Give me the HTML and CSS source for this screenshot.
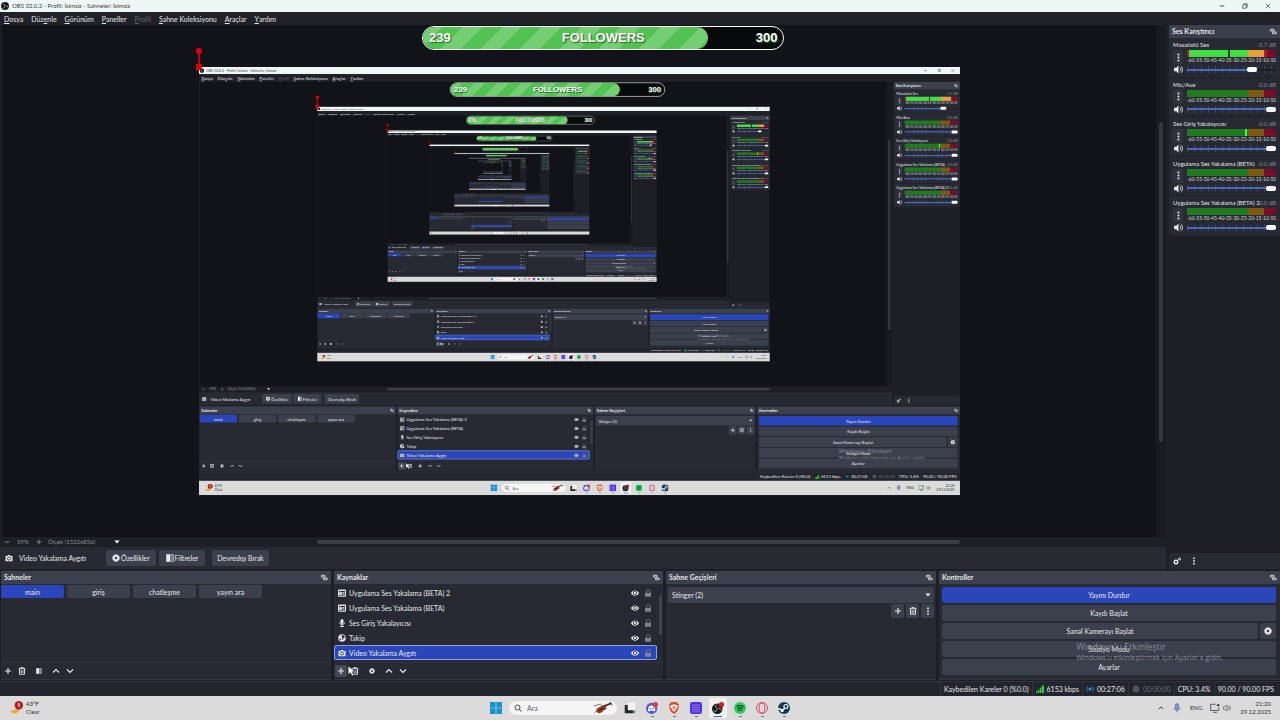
FILE: index.html
```html
<!DOCTYPE html>
<html lang="tr">
<head>
    <meta charset="UTF-8">
    <meta name="viewport" content="width=device-width, initial-scale=1.0">
    <title>OBS 32.0.2 - Profil: İsimsiz - Sahneler: İsimsiz</title>
    <link rel="stylesheet" href="styles.css">
</head>
<body>
    <!-- Shared icons -->
    <svg class="sprite" aria-hidden="true">
        <symbol id="i-obs" viewBox="0 0 16 16"><circle cx="8" cy="8" r="8" fill="#15161a"/><g fill="none" stroke="#c9ccd2" stroke-width="1.3"><path d="M8 7.500C5 7 4.500 4 6.500 2.500M8.500 8.500c2.500-2 5-.5 5 2M7.500 9c.3 3-2.500 4.500-4.500 3"/></g></symbol>
        <symbol id="i-dock" viewBox="0 0 16 16"><path d="M1 3h8v4H1zM6 9h8v4H6z" fill="none" stroke="currentColor" stroke-width="2"/></symbol>
        <symbol id="i-plus" viewBox="0 0 16 16"><path d="M8 2v12M2 8h12" stroke="currentColor" stroke-width="2.400"/></symbol>
        <symbol id="i-minus" viewBox="0 0 16 16"><path d="M2 8h12" stroke="currentColor" stroke-width="2.400"/></symbol>
        <symbol id="i-trash" viewBox="0 0 16 16"><path d="M1 3.500h14M5.500 3V1.200h5V3M3 4v10.500h10V4M6.300 6.500v5.500M9.700 6.500v5.500" fill="none" stroke="currentColor" stroke-width="1.900"/></symbol>
        <symbol id="i-filter" viewBox="0 0 16 16"><path d="M1 1h14v14H1z" fill="#777b85"/><path d="M1 1h7v14H1z" fill="currentColor"/><path d="M1 1h14v14H1z" fill="none" stroke="currentColor" stroke-width="1"/></symbol>
        <symbol id="i-up" viewBox="0 0 16 16"><path d="M2 11l6-6 6 6" fill="none" stroke="currentColor" stroke-width="2.400"/></symbol>
        <symbol id="i-down" viewBox="0 0 16 16"><path d="M2 5l6 6 6-6" fill="none" stroke="currentColor" stroke-width="2.400"/></symbol>
        <symbol id="i-gear" viewBox="0 0 16 16"><circle cx="8" cy="8" r="4.500" fill="none" stroke="currentColor" stroke-width="4"/><circle cx="8" cy="8" r="6.700" fill="none" stroke="currentColor" stroke-width="2" stroke-dasharray="3.200 2.060"/></symbol>
        <symbol id="i-gears" viewBox="0 0 16 16"><circle cx="6" cy="10" r="3.500" fill="none" stroke="currentColor" stroke-width="3"/><circle cx="13" cy="4" r="2" fill="none" stroke="currentColor" stroke-width="2"/></symbol>
        <symbol id="i-dots" viewBox="0 0 16 16"><g fill="currentColor"><circle cx="8" cy="2.500" r="1.800"/><circle cx="8" cy="8" r="1.800"/><circle cx="8" cy="13.500" r="1.800"/></g></symbol>
        <symbol id="i-camera" viewBox="0 0 16 16"><path d="M1 4h3.500l1.500-2h4l1.500 2H15v10.500H1z" fill="currentColor"/><circle cx="8" cy="9" r="3.200" fill="none" stroke="#2a2d38" stroke-width="1.600"/></symbol>
        <symbol id="i-app" viewBox="0 0 16 16"><path d="M1 2h14v12.500H1z" fill="none" stroke="currentColor" stroke-width="2"/><path d="M1 3h14M3.500 6.500H7v5H3.500zM9 7h4M9 9.500h4M9 12h4" stroke="currentColor" stroke-width="1.700" fill="currentColor"/></symbol>
        <symbol id="i-mic" viewBox="0 0 16 16"><rect x="5" y="0" width="6" height="10" rx="3" fill="currentColor"/><path d="M3 7c0 6 10 6 10 0M8 12v3M4 15h8" fill="none" stroke="currentColor" stroke-width="1.800"/></symbol>
        <symbol id="i-globe" viewBox="0 0 16 16"><circle cx="8" cy="8" r="7.500" fill="currentColor"/><path d="M8 2l4 1 2 4-3 1-1 4-2-2 1-3-2-2zM3 8l3 2v3l-2-1z" fill="#2a2d38"/></symbol>
        <symbol id="i-eye" viewBox="0 0 16 16"><path d="M0 8c3.500-7 12.500-7 16 0-3.500 7-12.500 7-16 0z" fill="currentColor"/><circle cx="8" cy="8" r="3.300" fill="none" stroke="#2a2d38" stroke-width="1.600"/></symbol>
        <symbol id="i-lock" viewBox="0 0 16 16"><path d="M2 8h12v7.500H2z" fill="currentColor"/><path d="M5 8V4.500C5 0 12 0 12 4.500V8" fill="none" stroke="currentColor" stroke-width="1.800"/></symbol>
        <symbol id="i-sound" viewBox="0 0 16 16"><path d="M0 5h4l4-4v14l-4-4H0z" fill="currentColor"/><path d="M10.500 5c2 1.500 2 4.500 0 6M12 2c4 3 4 9 0 12" fill="none" stroke="currentColor" stroke-width="1.700"/></symbol>
        <symbol id="i-traysound" viewBox="0 0 16 16"><path d="M1 5.500h3l4-3.500v12l-4-3.500H1zM10.500 5c2 1.500 2 4.500 0 6M12.500 3c3 3 3 7 0 10" fill="none" stroke="#444" stroke-width="1.200"/></symbol>
        <symbol id="i-caret" viewBox="0 0 16 16"><path d="M1 4h14l-7 8z" fill="currentColor"/></symbol>
        <symbol id="i-signal" viewBox="0 0 16 16"><path d="M0 12h3v4H0zM4 9h3v7H4zM8 5h3v11H8zM12 1h4v15h-4z" fill="#38c93e"/></symbol>
        <symbol id="i-live" viewBox="0 0 16 16"><circle cx="8" cy="8" r="3" fill="#3e92d8"/><path d="M4 3c-3 3-3 7 0 10M12 3c3 3 3 7 0 10" fill="none" stroke="#28628f" stroke-width="2.500"/></symbol>
        <symbol id="i-rec" viewBox="0 0 16 16"><circle cx="8" cy="8" r="7" fill="#50535b"/></symbol>
        <symbol id="i-moon" viewBox="0 0 32 32"><path d="M17 7c2 8-3 14-15 13 5 9 22 9 21-6-.5-4-2-6-6-7z" fill="#f0a43a"/><circle cx="21" cy="9" r="9" fill="#b3202c"/><path d="M19 7l2.500-2v8" stroke="#fff" stroke-width="2" fill="none"/></symbol>
        <symbol id="i-windows" viewBox="0 0 16 16"><path d="M0 0h7.600v7.600H0zM8.400 0H16v7.600H8.400zM0 8.400h7.600V16H0zM8.400 8.400H16V16H8.400z" fill="#1993d2"/></symbol>
        <symbol id="i-search" viewBox="0 0 16 16"><circle cx="7" cy="7" r="5" fill="none" stroke="#333" stroke-width="1.700"/><path d="M10.500 10.500L15 15" stroke="#333" stroke-width="2"/></symbol>
        <symbol id="i-violin" viewBox="0 0 40 24"><path d="M3 21L27 4M1 8l15-4" stroke="#6b4a3c" stroke-width="1.500"/><path d="M22 9L37 2" stroke="#352322" stroke-width="3"/><path d="M33 1l5 6" stroke="#352322" stroke-width="2"/><path d="M7 15c2-4 5-4 7-5 3-4 8-6 11-2 3 3 2 7-2 8-3 1-3 3-6 5-5 4-12 0-10-6z" fill="#983a22"/><path d="M12 17l9-5" stroke="#2b1715" stroke-width="2.500"/></symbol>
        <symbol id="i-taskview" viewBox="0 0 16 16"><path d="M5 1h10v10H5z" fill="#f5f5f5"/><path d="M1 4h4v7h7v4H1z" fill="#26282b"/><path d="M12 11h3v4h-3z" fill="#888"/></symbol>
        <symbol id="i-discord" viewBox="0 0 16 16"><circle cx="7.500" cy="8.500" r="7.500" fill="#5359d8"/><path d="M4 5.500c2.500-1.200 4.500-1.200 7 0 1 2 1.600 4 1.300 6l-2.300 1-.8-1.200H5.800L5 12.500l-2.300-1c-.3-2 .3-4 1.300-6z" fill="#fff"/><circle cx="5.700" cy="8.700" r="1.100" fill="#5359d8"/><circle cx="9.300" cy="8.700" r="1.100" fill="#5359d8"/><circle cx="12.500" cy="3.500" r="3.500" fill="#d93d4f"/></symbol>
        <symbol id="i-brave" viewBox="0 0 16 16"><path d="M4.500 0h7L13 2l1.500.5-.5 3 .3 2L12 13l-4 3-4-3L1.700 7.500l.3-2-.5-3L3 2z" fill="#e8482c"/><path d="M4 4l4-.7L12 4l1 2-3 5-2 2-2-2-3-5z" fill="#fff"/><path d="M5.500 6l2 1-.5 2 1 1 1-1-.5-2 2-1" stroke="#e8482c" fill="none" stroke-width="1.300"/></symbol>
        <symbol id="i-grid" viewBox="0 0 16 16"><rect width="16" height="16" rx="3" fill="#542fdd"/><path d="M3 4h10M3 7h10M3 10h10M3 13h10" stroke="#c8bdff" stroke-width="1.300" stroke-dasharray="1.500 1.300"/></symbol>
        <symbol id="i-obsrec" viewBox="0 0 16 16"><circle cx="7" cy="9" r="7" fill="#18191b"/><path d="M7 8C4.500 7.500 4 5 6 3.500M7.500 9.500c2-2 4.500-.5 4.500 1.500M6.500 9.500c.3 2.500-2 4-4 2.500" fill="none" stroke="#b8bbc0" stroke-width="1.200"/><circle cx="12.500" cy="3.500" r="3.500" fill="#df1822"/></symbol>
        <symbol id="i-spotify" viewBox="0 0 16 16"><circle cx="8" cy="8" r="8" fill="#28cf62"/><path d="M3.500 5.500c3-1 6.500-.8 9.500.9M4 8.300c2.500-.8 5.500-.5 8 .8M4.500 11c2-.6 4.500-.4 6.500.6" fill="none" stroke="#173b24" stroke-width="1.500"/></symbol>
        <symbol id="i-opera" viewBox="0 0 16 16"><circle cx="8" cy="8" r="7.300" fill="none" stroke="#dd3b63" stroke-width="1.200"/><ellipse cx="8" cy="8" rx="3.800" ry="6.700" fill="none" stroke="#dd3b63" stroke-width="1.200"/></symbol>
        <symbol id="i-steam" viewBox="0 0 16 16"><circle cx="8" cy="8" r="8" fill="#123858"/><circle cx="10.500" cy="6" r="2.600" fill="none" stroke="#fff" stroke-width="1.500"/><path d="M0 8.500l6 2.500L9 8.300" fill="none" stroke="#fff" stroke-width="2"/><circle cx="5.500" cy="11.500" r="2" fill="#fff"/></symbol>
        <symbol id="i-traymic" viewBox="0 0 16 16"><rect x="5.500" y="1" width="5" height="9" rx="2.500" fill="#8797d4" stroke="#4658a0"/><path d="M3 7c0 6 10 6 10 0M8 12v3" fill="none" stroke="#4b5a92" stroke-width="1.200"/></symbol>
        <symbol id="i-monitor" viewBox="0 0 16 16"><path d="M9 2H1v10h13V7M5 15h6" fill="none" stroke="#333" stroke-width="1.200"/><path d="M11 2h4v3h-4z" fill="#333"/></symbol>
        <symbol id="i-restore" viewBox="0 0 16 16"><path d="M2 5h9v9H2zM5 5V2h9v9h-3" fill="none" stroke="#333" stroke-width="1.700"/></symbol>
        <symbol id="i-close" viewBox="0 0 16 16"><path d="M2 2l12 12M14 2L2 14" stroke="#333" stroke-width="1.700"/></symbol>
        <symbol id="i-cursor" viewBox="0 0 16 20"><path d="M2 1v15l4-3 3 6 3-1.500-3-6 5-.5z" fill="#fff" stroke="#222"/></symbol>
    </svg>

    <div class="screen">
        <header class="title-bar">
            <svg class="icon big"><use href="#i-obs"/></svg>
            <span class="title-text">OBS 32.0.2 - Profil: İsimsiz - Sahneler: İsimsiz</span>
            <button class="win-btn" aria-label="Simge durumuna küçült"><svg class="icon"><use href="#i-minus"/></svg></button>
            <button class="win-btn" aria-label="Önceki boyut"><svg class="icon"><use href="#i-restore"/></svg></button>
            <button class="win-btn" aria-label="Kapat"><svg class="icon"><use href="#i-close"/></svg></button>
        </header>

        <nav class="menu-bar">
            <button><u>D</u>osya</button>
            <button>Düz<u>e</u>nle</button>
            <button><u>G</u>örünüm</button>
            <button><u>P</u>aneller</button>
            <button disabled><u>P</u>rofil</button>
            <button><u>S</u>ahne Koleksiyonu</button>
            <button><u>A</u>raçlar</button>
            <button><u>Y</u>ardım</button>
        </nav>

        <main class="workspace">
            <div class="upper">
                <section class="stage">
                    <div class="preview-row">
                        <div class="preview">
                            <div class="goal">
                                <div class="goal-fill"></div>
                                <span>239</span>
                                <span>FOLLOWERS</span>
                                <span>300</span>
                            </div>
                            <!-- The captured display goes in here -->
                            <div class="capture"><i class="handle"></i></div>
                        </div>
                        <div class="v-scroll"><i></i></div>
                    </div>
                    <div class="zoom-bar">
                        <button aria-label="Uzaklaştır"><svg class="icon"><use href="#i-minus"/></svg></button>
                        <span class="zoom-value">59%</span>
                        <button aria-label="Yakınlaştır"><svg class="icon"><use href="#i-plus"/></svg></button>
                        <button class="zoom-scale"><span>Ölçek (1522x856)</span><svg class="icon"><use href="#i-caret"/></svg></button>
                        <div class="h-scroll"><i></i></div>
                    </div>
                    <div class="source-bar">
                        <svg class="icon big"><use href="#i-camera"/></svg>
                        <span class="source-name">Video Yakalama Aygıtı</span>
                        <button class="btn props"><svg class="icon big"><use href="#i-gear"/></svg>Özellikler</button>
                        <button class="btn filters"><svg class="icon big"><use href="#i-filter"/></svg>Filtreler</button>
                        <button class="btn disable">Devredışı Bırak</button>
                    </div>
                </section>

                <aside class="mixer">
                    <h2 class="dock-title">Ses Karıştırıcı<svg class="icon"><use href="#i-dock"/></svg></h2>
                    <div class="channels">
                        <div class="channel live">
                            <div class="channel-name"><span>Masaüstü Ses</span><span class="db">-5.7 dB</span></div>
                            <button class="more" aria-label="Seçenekler"><svg class="icon"><use href="#i-dots"/></svg></button>
                            <div class="meter"></div>
                            <div class="scale"></div>
                            <button class="mute" aria-label="Sustur"><svg class="icon"><use href="#i-sound"/></svg></button>
                            <input type="range" min="0" max="100" value="76" aria-label="Masaüstü Ses">
                        </div>
                        <div class="channel">
                            <div class="channel-name"><span>Mic/Aux</span><span class="db">0.0 dB</span></div>
                            <button class="more" aria-label="Seçenekler"><svg class="icon"><use href="#i-dots"/></svg></button>
                            <div class="meter"></div>
                            <div class="scale"></div>
                            <button class="mute" aria-label="Sustur"><svg class="icon"><use href="#i-sound"/></svg></button>
                            <input type="range" min="0" max="100" value="100" aria-label="Mic/Aux">
                        </div>
                        <div class="channel peak">
                            <div class="channel-name"><span>Ses Giriş Yakalayıcısı</span><span class="db">0.0 dB</span></div>
                            <button class="more" aria-label="Seçenekler"><svg class="icon"><use href="#i-dots"/></svg></button>
                            <div class="meter"></div>
                            <div class="scale"></div>
                            <button class="mute" aria-label="Sustur"><svg class="icon"><use href="#i-sound"/></svg></button>
                            <input type="range" min="0" max="100" value="100" aria-label="Ses Giriş Yakalayıcısı">
                        </div>
                        <div class="channel">
                            <div class="channel-name"><span>Uygulama Ses Yakalama (BETA)</span><span class="db">0.0 dB</span></div>
                            <button class="more" aria-label="Seçenekler"><svg class="icon"><use href="#i-dots"/></svg></button>
                            <div class="meter"></div>
                            <div class="scale"></div>
                            <button class="mute" aria-label="Sustur"><svg class="icon"><use href="#i-sound"/></svg></button>
                            <input type="range" min="0" max="100" value="100" aria-label="Uygulama Ses Yakalama (BETA)">
                        </div>
                        <div class="channel">
                            <div class="channel-name"><span>Uygulama Ses Yakalama (BETA) 2</span><span class="db">0.0 dB</span></div>
                            <button class="more" aria-label="Seçenekler"><svg class="icon"><use href="#i-dots"/></svg></button>
                            <div class="meter"></div>
                            <div class="scale"></div>
                            <button class="mute" aria-label="Sustur"><svg class="icon"><use href="#i-sound"/></svg></button>
                            <input type="range" min="0" max="100" value="100" aria-label="Uygulama Ses Yakalama (BETA) 2">
                        </div>
                    </div>
                    <div class="mixer-tools">
                        <button aria-label="Gelişmiş ses özellikleri"><svg class="icon big"><use href="#i-gears"/></svg></button>
                        <button aria-label="Menü"><svg class="icon big"><use href="#i-dots"/></svg></button>
                    </div>
                </aside>
            </div>

            <div class="docks">
                <section class="dock">
                    <h2 class="dock-title">Sahneler<svg class="icon"><use href="#i-dock"/></svg></h2>
                    <div class="scenes">
                        <button class="scene active">main</button>
                        <button class="scene">giriş</button>
                        <button class="scene">chatleşme</button>
                        <button class="scene">yayın ara</button>
                    </div>
                    <div class="dock-tools">
                        <button aria-label="Ekle"><svg class="icon big"><use href="#i-plus"/></svg></button>
                        <button aria-label="Sil"><svg class="icon big"><use href="#i-trash"/></svg></button>
                        <button class="spaced" aria-label="Filtreler"><svg class="icon"><use href="#i-filter"/></svg></button>
                        <button class="spaced" aria-label="Yukarı"><svg class="icon big"><use href="#i-up"/></svg></button>
                        <button aria-label="Aşağı"><svg class="icon big"><use href="#i-down"/></svg></button>
                    </div>
                </section>

                <section class="dock">
                    <h2 class="dock-title">Kaynaklar<svg class="icon"><use href="#i-dock"/></svg></h2>
                    <div class="source-area">
                        <ul class="sources">
                            <li><svg class="icon big"><use href="#i-app"/></svg><span>Uygulama Ses Yakalama (BETA) 2</span><button aria-label="Göster"><svg class="icon big"><use href="#i-eye"/></svg></button><button class="lock" aria-label="Kilitle"><svg class="icon big"><use href="#i-lock"/></svg></button></li>
                            <li><svg class="icon big"><use href="#i-app"/></svg><span>Uygulama Ses Yakalama (BETA)</span><button aria-label="Göster"><svg class="icon big"><use href="#i-eye"/></svg></button><button class="lock" aria-label="Kilitle"><svg class="icon big"><use href="#i-lock"/></svg></button></li>
                            <li><svg class="icon big"><use href="#i-mic"/></svg><span>Ses Giriş Yakalayıcısı</span><button aria-label="Göster"><svg class="icon big"><use href="#i-eye"/></svg></button><button class="lock" aria-label="Kilitle"><svg class="icon big"><use href="#i-lock"/></svg></button></li>
                            <li><svg class="icon big"><use href="#i-globe"/></svg><span>Takip</span><button aria-label="Göster"><svg class="icon big"><use href="#i-eye"/></svg></button><button class="lock" aria-label="Kilitle"><svg class="icon big"><use href="#i-lock"/></svg></button></li>
                            <li class="selected"><svg class="icon big"><use href="#i-camera"/></svg><span>Video Yakalama Aygıtı</span><button aria-label="Göster"><svg class="icon big"><use href="#i-eye"/></svg></button><button class="lock" aria-label="Kilitle"><svg class="icon big"><use href="#i-lock"/></svg></button></li>
                        </ul>
                        <div class="list-scroll"><i></i></div>
                    </div>
                    <div class="dock-tools">
                        <button class="hover" aria-label="Ekle"><svg class="icon big"><use href="#i-plus"/></svg></button>
                        <button aria-label="Sil"><svg class="icon big"><use href="#i-trash"/></svg></button>
                        <button class="spaced" aria-label="Özellikler"><svg class="icon"><use href="#i-gear"/></svg></button>
                        <button class="spaced" aria-label="Yukarı"><svg class="icon big"><use href="#i-up"/></svg></button>
                        <button aria-label="Aşağı"><svg class="icon big"><use href="#i-down"/></svg></button>
                        <svg class="cursor"><use href="#i-cursor"/></svg>
                    </div>
                </section>

                <section class="dock">
                    <h2 class="dock-title">Sahne Geçişleri<svg class="icon"><use href="#i-dock"/></svg></h2>
                    <div class="transitions">
                        <label class="select-box">
                            <select aria-label="Sahne geçişi"><option>Stinger (2)</option></select>
                            <svg class="icon"><use href="#i-caret"/></svg>
                        </label>
                        <div class="transition-tools">
                            <button class="btn" aria-label="Ekle"><svg class="icon big"><use href="#i-plus"/></svg></button>
                            <button class="btn" aria-label="Sil"><svg class="icon big"><use href="#i-trash"/></svg></button>
                            <button class="btn" aria-label="Menü"><svg class="icon big"><use href="#i-dots"/></svg></button>
                        </div>
                    </div>
                </section>

                <section class="dock">
                    <h2 class="dock-title">Kontroller<svg class="icon"><use href="#i-dock"/></svg></h2>
                    <div class="controls">
                        <button class="btn primary">Yayını Durdur</button>
                        <button class="btn">Kaydı Başlat</button>
                        <div class="split">
                            <button class="btn">Sanal Kamerayı Başlat</button>
                            <button class="btn" aria-label="Kamera ayarları"><svg class="icon big"><use href="#i-gear"/></svg></button>
                        </div>
                        <button class="btn">Stüdyo Modu</button>
                        <button class="btn">Ayarlar</button>
                    </div>
                </section>
            </div>
        </main>

        <footer class="status-bar">
            <span>Kaybedilen Kareler 0 (%0.0)</span>
            <span><svg class="icon big"><use href="#i-signal"/></svg>6153 kbps</span>
            <span><svg class="icon big"><use href="#i-live"/></svg>00:27:06</span>
            <span class="dim"><svg class="icon big"><use href="#i-rec"/></svg>00:00:00</span>
            <span>CPU: 3.4%</span>
            <span>90.00 / 90.00 FPS</span>
        </footer>

        <div class="taskbar">
            <button class="weather">
                <svg class="weather-icon"><use href="#i-moon"/></svg>
                <span>43°F<br>Clear</span>
            </button>
            <div class="task-icons">
                <button aria-label="Başlat"><svg class="app-icon"><use href="#i-windows"/></svg></button>
                <label class="search">
                    <svg class="icon big"><use href="#i-search"/></svg>
                    <input type="text" placeholder="Ara" aria-label="Ara">
                    <svg class="violin"><use href="#i-violin"/></svg>
                </label>
                <button aria-label="Görev görünümü"><svg class="app-icon"><use href="#i-taskview"/></svg></button>
                <button class="open" aria-label="Discord"><svg class="app-icon"><use href="#i-discord"/></svg></button>
                <button class="open" aria-label="Brave"><svg class="app-icon"><use href="#i-brave"/></svg></button>
                <button class="open" aria-label="Uygulamalar"><svg class="app-icon"><use href="#i-grid"/></svg></button>
                <button class="open current" aria-label="OBS Studio"><svg class="app-icon"><use href="#i-obsrec"/></svg></button>
                <button class="open" aria-label="Spotify"><svg class="app-icon"><use href="#i-spotify"/></svg></button>
                <button class="open" aria-label="Opera"><svg class="app-icon"><use href="#i-opera"/></svg></button>
                <button class="open" aria-label="Steam"><svg class="app-icon"><use href="#i-steam"/></svg></button>
            </div>
            <div class="tray">
                <svg class="icon"><use href="#i-up"/></svg>
                <svg class="icon large"><use href="#i-traymic"/></svg>
                <span>ENG</span>
                <span class="tray-pair"><svg class="icon large"><use href="#i-monitor"/></svg><svg class="icon big"><use href="#i-traysound"/></svg></span>
                <span class="clock">21:20<br>29.12.2025</span>
            </div>
        </div>

        <div class="watermark">
            <strong>Windows'u Etkinleştir</strong>
            <span>Windows'u etkinleştirmek için Ayarlar'a gidin.</span>
        </div>
    </div>

    <script src="script.js"></script>
</body>
</html>
```
FILE: styles.css
```css
* {
    box-sizing: border-box;
}
body {
    margin: 0;
    overflow: hidden;
    background-color: #1d1f26;
    font-family: Lato, "Open Sans", sans-serif;
    font-size: 7px;
    line-height: 10px;
    color: #e6e7ea;
}
button,
input,
select {
    margin: 0;
    padding: 0;
    border: 0;
    background: none;
    font: inherit;
    color: inherit;
}
button {
    display: flex;
    align-items: center;
    justify-content: center;
    white-space: nowrap;
}
.sprite {
    position: absolute;
    width: 0;
    height: 0;
}
.icon {
    flex: none;
    display: block;
    width: 6px;
    height: 6px;
}
.icon.big {
    width: 8px;
    height: 8px;
}
.icon.large {
    width: 10px;
    height: 10px;
}
.screen {
    position: relative;
    display: flex;
    flex-direction: column;
    width: 100vw;
    height: 100vh;
    background-color: #1d1f26;
}

/* Title and menu */
.title-bar {
    display: flex;
    align-items: center;
    height: 12px;
    padding: 0 7px 0 1px;
    background-color: #eff6f6;
    color: #3a3d40;
    font-size: 6px;
}
.title-text {
    flex: 1;
    margin-left: 3px;
    white-space: nowrap;
}
.win-btn {
    width: 11px;
    margin-left: 12px;
}
.menu-bar {
    display: flex;
    align-items: center;
    gap: 8px;
    height: 13px;
    padding: 0 4px;
    background-color: #1f2127;
}
.menu-bar button:disabled {
    color: #62656c;
}

/* Preview */
.workspace {
    flex: 1;
    display: flex;
    flex-direction: column;
    min-height: 0;
}
.upper {
    flex: 1;
    display: flex;
    gap: 3px;
    min-height: 0;
}
.stage {
    flex: 1;
    display: flex;
    flex-direction: column;
    min-width: 0;
}
.preview-row {
    flex: 1;
    display: flex;
    min-height: 0;
    padding-left: 2px;
}
.preview {
    position: relative;
    flex: 1;
    display: flex;
    align-items: center;
    justify-content: center;
    background-color: #121318;
}
.capture {
    position: relative;
    width: 59.45vw;
    height: 59.45vh;
}
.capture .screen {
    transform: scale(0.5945);
    transform-origin: 0 0;
}
.handle {
    position: absolute;
    z-index: 1;
    left: -1px;
    top: -16px;
    width: 2px;
    height: 17px;
    background-color: #c4000e;
}
.handle::before,
.handle::after {
    content: "";
    position: absolute;
    left: -2px;
    width: 6px;
    height: 6px;
    background-color: #e0000f;
}
.handle::before {
    top: -3px;
    border-radius: 3px;
}
.handle::after {
    bottom: -2px;
}
.goal {
    position: absolute;
    top: 1px;
    left: 36.4%;
    width: 31.4%;
    height: 24px;
    display: flex;
    align-items: center;
    justify-content: space-between;
    padding: 0 6px;
    border: 1px solid #fff;
    border-radius: 12px;
    overflow: hidden;
    background-color: #08090b;
    color: #fff;
    font: bold 13px/22px "Liberation Sans", Arial, sans-serif;
    text-shadow: 1px 1px 1px #2c632c;
}
.goal span {
    position: relative;
}
.goal-fill {
    position: absolute;
    inset: 0 21% 0 0;
    border-radius: 11px;
    background: repeating-linear-gradient(135deg, #74ce74 0 14px, #52c252 14px 28px);
}
.v-scroll {
    flex: none;
    width: 10px;
    padding: 97px 3px 0 3px;
    background-color: #1a1b20;
}
.v-scroll i {
    display: block;
    height: 77%;
    border-radius: 2px;
    background-color: #343740;
}
.zoom-bar {
    display: flex;
    align-items: center;
    height: 10px;
    padding-left: 4px;
    font-size: 6px;
    color: #8d9098;
}
.zoom-value {
    width: 18px;
    text-align: center;
    margin: 0 4px;
}
.zoom-scale {
    width: 72px;
    margin-left: 6px;
    justify-content: space-between;
}
.zoom-scale .icon {
    color: #fff;
}
.h-scroll {
    flex: 1;
    margin-right: 9px;
}
.h-scroll i {
    display: block;
    width: 62%;
    height: 4px;
    margin: 0 auto;
    border-radius: 2px;
    background-color: #3c3e48;
}
.source-bar {
    display: flex;
    align-items: center;
    height: 22px;
    padding-left: 5px;
    background-color: #272a33;
}
.source-name {
    width: 87px;
    margin-left: 6px;
    white-space: nowrap;
}
.btn {
    height: 16px;
    border-radius: 2px;
    background-color: #3c404d;
}
.source-bar .btn {
    gap: 1px;
}
.props {
    width: 50px;
}
.filters {
    width: 46px;
    margin: 0 7px 0 3px;
}
.disable {
    width: 57px;
}

/* Mixer */
.mixer {
    flex: none;
    display: flex;
    flex-direction: column;
    width: 111px;
    background-color: #1d1f24;
}
.dock-title {
    display: flex;
    align-items: center;
    justify-content: space-between;
    height: 13px;
    margin: 0;
    padding: 0 3px;
    background-color: #3c404d;
    font-size: 7px;
    font-weight: bold;
    line-height: 13px;
}
.channels {
    display: grid;
    grid-template-rows: repeat(5, 1fr);
    height: 198px;
    background-color: #272a33;
}
.channel {
    display: grid;
    grid-template: 11px 7px 7px 11px / 10px 1fr;
    column-gap: 4px;
    padding: 1px 4px 0 4px;
    border-bottom: 1px solid #1f2229;
}
.channel-name {
    grid-column: 1 / 3;
    position: relative;
    white-space: nowrap;
    font-size: 6px;
    line-height: 11px;
}
.db {
    position: absolute;
    right: 0;
    color: #858892;
}
.more {
    grid-row: 2 / 4;
    width: 10px;
    border-radius: 2px;
    background-color: #30343f;
}
.more .icon {
    width: 9px;
    height: 9px;
}
.meter {
    background: linear-gradient(90deg, #1f7a20 0 68%, #7e5a11 68% 86%, #790c2a 86%);
}
.live .meter {
    background: linear-gradient(90deg, #a8202a 0 2%, #40e044 2% 46%, #16401b 46% 48%, #40e044 48% 68%, #e6a23a 68% 87%, #b3172f 87% 90%, #790c2a 90%);
}
.peak .meter {
    background: linear-gradient(90deg, #1f7a20 0 65%, #4ff052 65% 67%, #1f7a20 67% 68%, #7e5a11 68% 86%, #790c2a 86%);
}
.scale {
    display: flex;
    justify-content: space-between;
    overflow: hidden;
    color: #d4d6da;
    font-size: 5px;
    line-height: 7px;
}
.scale span {
    flex: 0 1 auto;
    min-width: 0;
}
.mute .icon {
    width: 9px;
    height: 9px;
}
input[type="range"] {
    appearance: none;
    align-self: center;
    width: 100%;
    height: 7px;
    background: linear-gradient(#4768bd, #4768bd) center / 100% 2px no-repeat,
        repeating-linear-gradient(90deg, #3d4558 0 1px, transparent 1px 7px);
}
.live input[type="range"] {
    background: linear-gradient(90deg, #4768bd 76%, #1c1e25 76%) center / 100% 2px no-repeat,
        repeating-linear-gradient(90deg, #3d4558 0 1px, transparent 1px 7px);
}
input[type="range"]::-webkit-slider-thumb {
    appearance: none;
    width: 10px;
    height: 5px;
    border-radius: 2px;
    background-color: #fff;
}
.mixer-tools {
    display: flex;
    align-items: center;
    gap: 9px;
    height: 16px;
    margin-top: auto;
    padding-left: 4px;
    background-color: #272a33;
}

/* Docks */
.docks {
    display: grid;
    grid-template-columns: 330fr 329fr 270fr 341fr;
    gap: 3px;
    padding: 2px 0 1px 1px;
}
.dock {
    display: flex;
    flex-direction: column;
    min-width: 0;
    height: 109px;
    border-bottom: 1px solid #343741;
    background-color: #272a33;
}
.dock-title .icon {
    width: 7px;
    height: 7px;
}
.scenes {
    flex: 1;
    display: flex;
    align-items: flex-start;
    gap: 3px;
    padding: 1px 0;
}
.scene {
    width: 63px;
    height: 13px;
    border-radius: 2px;
    background-color: #3c404d;
}
.scene.active {
    background-color: #2a46ba;
}
.dock-tools {
    position: relative;
    display: flex;
    align-items: center;
    gap: 2px;
    height: 17px;
    padding: 0 0 1px 1px;
    border-top: 1px solid #30333d;
}
.dock-tools button {
    width: 12px;
    height: 12px;
    border-radius: 2px;
}
.dock-tools .spaced {
    margin-left: 3px;
}
.dock-tools .hover {
    background-color: #454955;
}
.cursor {
    position: absolute;
    left: 13px;
    top: 2px;
    width: 9px;
    height: 12px;
}
.source-area {
    flex: 1;
    display: flex;
    padding-top: 1px;
}
.sources {
    flex: 1;
    margin: 0;
    padding: 0;
    list-style: none;
}
.sources li {
    display: flex;
    align-items: center;
    height: 15px;
    padding: 0 4px 0 3px;
    border: 1px solid transparent;
    border-radius: 2px;
}
.sources li span {
    flex: 1;
    margin-left: 3px;
}
.sources .lock {
    margin-left: 5px;
    color: #80838b;
}
.sources .selected {
    border-color: #8f9fe2;
    background-color: #2a46ba;
}
.list-scroll {
    width: 6px;
    padding: 10px 1px 0 2px;
}
.list-scroll i {
    display: block;
    height: 40px;
    border-radius: 2px;
    background-color: #40434e;
}
.transitions {
    padding: 3px 2px;
}
.select-box {
    display: flex;
    align-items: center;
    height: 16px;
    padding-right: 3px;
    border-radius: 2px;
    background-color: #3c404d;
}
.select-box select {
    flex: 1;
    appearance: none;
    padding-left: 4px;
}
.transition-tools {
    display: flex;
    justify-content: flex-end;
    gap: 2px;
    margin-top: 1px;
}
.transition-tools .btn {
    width: 13px;
    height: 14px;
}
.controls {
    display: flex;
    flex-direction: column;
    gap: 2px;
    padding: 3px 4px 0 3px;
}
.primary {
    background-color: #2a46ba;
}
.split {
    display: grid;
    grid-template-columns: 1fr 16px;
    gap: 2px;
}

/* Status bar */
.status-bar {
    display: flex;
    justify-content: flex-end;
    height: 15px;
    padding-right: 3px;
    border-top: 1px solid #30333d;
    background-color: #22252d;
    white-space: nowrap;
}
.status-bar span {
    display: flex;
    align-items: center;
    gap: 3px;
    padding: 0 3px;
    border-left: 1px solid #31343d;
}
.status-bar .dim {
    color: #6c6f77;
}

/* Taskbar */
.taskbar {
    display: grid;
    grid-template-columns: 1fr auto 1fr;
    align-items: center;
    height: 24px;
    background-color: #dadbda;
    color: #333;
    font-size: 6px;
    line-height: 8px;
}
.weather {
    justify-self: start;
    gap: 2px;
    padding-left: 9px;
    text-align: left;
}
.weather-icon {
    width: 15px;
    height: 15px;
}
.task-icons {
    display: flex;
    align-items: center;
    gap: 4px;
}
.task-icons button {
    position: relative;
    width: 18px;
    height: 20px;
    border-radius: 2px;
}
.app-icon {
    width: 12px;
    height: 12px;
}
.open::after {
    content: "";
    position: absolute;
    left: 8px;
    bottom: 1px;
    width: 3px;
    height: 1px;
    background-color: #777;
}
.task-icons .current {
    background-color: #f1f1f1;
}
.current::after {
    left: 5px;
    width: 8px;
    background-color: #1b6cc0;
}
.search {
    display: flex;
    align-items: center;
    width: 108px;
    height: 14px;
    padding: 0 3px 0 5px;
    border-radius: 7px;
    background-color: #f4f5f4;
}
.search input {
    flex: 1;
    min-width: 0;
    margin-left: 5px;
    font-size: 7px;
}
.search input::placeholder {
    color: #666;
}
.violin {
    width: 22px;
    height: 12px;
}
.tray {
    justify-self: end;
    display: flex;
    align-items: center;
    gap: 8px;
    padding-right: 9px;
}
.tray-pair {
    display: flex;
    align-items: center;
    gap: 3px;
}
.clock {
    margin-left: 1px;
    text-align: right;
}
.watermark {
    position: absolute;
    right: 57px;
    bottom: 57px;
    display: flex;
    flex-direction: column;
    color: #9497a0;
    font-family: "Open Sans", sans-serif;
    opacity: 0.9;
    white-space: nowrap;
    pointer-events: none;
}
.watermark strong {
    font-size: 9px;
    font-weight: normal;
    line-height: 12px;
}
```
FILE: script.js
```js
// Decibel labels under every meter
document.querySelectorAll('.scale').forEach(function (scale) {
    for (let db = -60; db <= 0; db += 5) {
        const mark = document.createElement('span');
        mark.textContent = db;
        scale.appendChild(mark);
    }
});

// The display capture shows the whole desktop again, level after level
const depth = 8;
const readable = 3; // text is smaller than a pixel below this level
const blank = document.querySelector('.screen').cloneNode(true);
let slot = document.querySelector('.capture');
for (let i = 1; i <= depth; i++) {
    const copy = blank.cloneNode(true);
    copy.inert = true;
    copy.setAttribute('aria-hidden', 'true');
    if (i > readable) {
        const walker = document.createTreeWalker(copy, NodeFilter.SHOW_TEXT);
        while (walker.nextNode()) {
            walker.currentNode.data = '';
        }
    }
    slot.appendChild(copy);
    slot = copy.querySelector('.capture');
}
```
